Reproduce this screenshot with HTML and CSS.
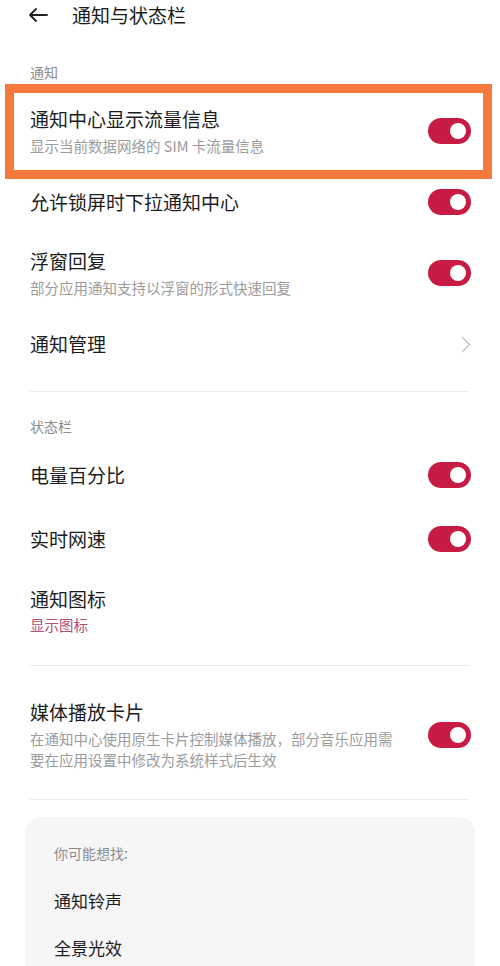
FILE: index.html
```html
<!DOCTYPE html>
<html lang="zh-CN">
<head>
<meta charset="utf-8">
<title>通知与状态栏</title>
<link rel="stylesheet" href="styles.css">
</head>
<body>
<div class="page">
  <header class="topbar">
    <svg class="back" width="20" height="14" viewBox="0 0 20 14"><path d="M19 7H2M8 1L2 7l6 6" fill="none" stroke="#222" stroke-width="1.8" stroke-linecap="round" stroke-linejoin="round"/></svg>
    <span class="title">通知与状态栏</span>
  </header>

  <div class="section-label first">通知</div>

  <div class="highlight">
    <div class="hl-row">
      <div class="text">
        <div class="item-title">通知中心显示流量信息</div>
        <div class="item-sub">显示当前数据网络的 SIM 卡流量信息</div>
      </div>
      <span class="toggle"><span class="knob"></span></span>
    </div>
  </div>

  <div class="row pad-10">
    <div class="text"><div class="item-title">允许锁屏时下拉通知中心</div></div>
    <span class="toggle"><span class="knob"></span></span>
  </div>

  <div class="row pad-23">
    <div class="text">
      <div class="item-title">浮窗回复</div>
      <div class="item-sub">部分应用通知支持以浮窗的形式快速回复</div>
    </div>
    <span class="toggle"><span class="knob"></span></span>
  </div>

  <div class="row pad-10">
    <div class="text"><div class="item-title">通知管理</div></div>
    <svg class="chev" width="10" height="17" viewBox="0 0 10 17"><path d="M1.5 1.5l7 7-7 7" fill="none" stroke="#c4c4c4" stroke-width="1.4" stroke-linecap="round" stroke-linejoin="round"/></svg>
  </div>

  <div class="divider d1"></div>

  <div class="section-label second">状态栏</div>

  <div class="row pad-19">
    <div class="text"><div class="item-title">电量百分比</div></div>
    <span class="toggle"><span class="knob"></span></span>
  </div>

  <div class="row pad-19">
    <div class="text"><div class="item-title">实时网速</div></div>
    <span class="toggle"><span class="knob"></span></span>
  </div>

  <div class="row pad-15">
    <div class="text">
      <div class="item-title">通知图标</div>
      <div class="item-sub accent">显示图标</div>
    </div>
  </div>

  <div class="divider d2"></div>

  <div class="row media">
    <div class="text">
      <div class="item-title">媒体播放卡片</div>
      <div class="item-sub">在通知中心使用原生卡片控制媒体播放，部分音乐应用需要在应用设置中修改为系统样式后生效</div>
    </div>
    <span class="toggle"><span class="knob"></span></span>
  </div>

  <div class="divider"></div>

  <section class="suggest">
    <div class="suggest-head">你可能想找:</div>
    <div class="suggest-item first-item">通知铃声</div>
    <div class="suggest-item second-item">全景光效</div>
  </section>
</div>
</body>
</html>
```

FILE: styles.css
```css
html, body {
  margin: 0;
  padding: 0;
  background: #ffffff;
  overflow: hidden;
}

body {
  font-family: "Noto Sans CJK SC", "Noto Sans", sans-serif;
  color: #1c1c1c;
}

.page {
  width: 500px;
  height: 966px;
  overflow: hidden;
}

.topbar {
  height: 30px;
  display: flex;
  align-items: center;
  padding-left: 28px;
  gap: 24px;
}

.back {
  display: block;
}

.title {
  font-size: 19px;
  line-height: 26px;
  color: #1a1a1a;
}

.section-label {
  font-size: 14px;
  line-height: 18px;
  color: #8c8c8c;
  padding-left: 30px;
}

.section-label.first {
  margin-top: 33px;
}

.section-label.second {
  margin-top: 25px;
  margin-bottom: 8px;
}

.highlight {
  margin: 3px 8px 0 5px;
  border: 9px solid #f5783d;
}

.hl-row {
  display: flex;
  align-items: center;
  justify-content: space-between;
  padding: 13px 12px 13px 16px;
  gap: 20px;
}

.row {
  display: flex;
  align-items: center;
  justify-content: space-between;
  padding-left: 30px;
  padding-right: 29px;
  gap: 30px;
}

.pad-10 { padding-top: 10px; padding-bottom: 10px; }
.pad-23 { padding-top: 23px; padding-bottom: 23px; }
.pad-19 { padding-top: 19px; padding-bottom: 19px; }
.pad-15 { padding-top: 15px; padding-bottom: 15px; }
.media { padding-top: 33px; padding-bottom: 29px; }

.text {
  flex: 1;
  min-width: 0;
}

.item-title {
  font-size: 19px;
  line-height: 26px;
  color: #1c1c1c;
}

.item-sub {
  font-size: 14.5px;
  line-height: 20.5px;
  margin-top: 4px;
  color: #9b9b9b;
}

.item-sub.accent {
  color: #b24d76;
  margin-top: 3px;
  line-height: 20px;
}

.toggle {
  flex: none;
  width: 43px;
  height: 26px;
  border-radius: 13px;
  background: #c71b43;
  display: flex;
  align-items: center;
  justify-content: flex-end;
  padding-right: 5px;
  box-sizing: border-box;
}

.knob {
  width: 16px;
  height: 16px;
  border-radius: 50%;
  background: #ffffff;
}

.chev {
  display: block;
  flex: none;
  margin-right: 0;
}

.divider {
  height: 1px;
  background: #ececec;
  margin: 0 30px;
}

.divider.d1 { margin-top: 24px; }
.divider.d2 { margin-top: 15px; }

.suggest {
  margin: 17px 25px 0;
  padding: 26px 29px 8px;
  background: #f6f6f6;
  border-radius: 16px 16px 0 0;
}

.suggest-head {
  font-size: 14px;
  line-height: 20px;
  color: #8c8c8c;
}

.suggest-item {
  font-size: 17px;
  line-height: 24px;
  color: #1c1c1c;
}

.suggest-item.first-item { margin-top: 26px; }
.suggest-item.second-item { margin-top: 23px; }
```
